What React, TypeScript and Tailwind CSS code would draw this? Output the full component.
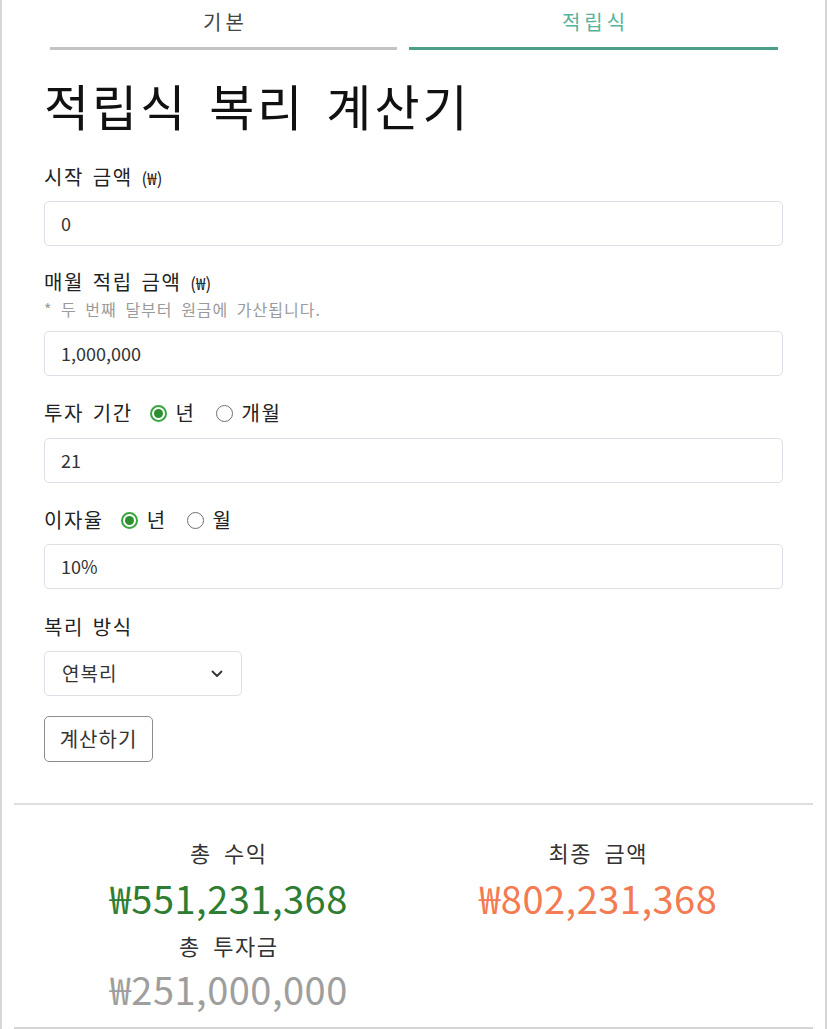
function Radio({ checked, label }: { checked?: boolean; label: string }) {
  return (
    <span className="flex items-center gap-[9px]">
      {checked ? (
        <span className="flex h-[17px] w-[17px] items-center justify-center rounded-full border-2 border-[#3aa63f]">
          <span className="h-[9px] w-[9px] rounded-full bg-[#2c8f2f]" />
        </span>
      ) : (
        <span className="h-[17px] w-[17px] rounded-full border-[1.5px] border-[#6f6f6f]" />
      )}
      <span>{label}</span>
    </span>
  )
}

function Field({ value }: { value: string }) {
  return (
    <div className="flex h-[45px] w-full items-center rounded-[5px] border border-[#dcdfe5] px-[16px] text-[18px] text-[#333]">
      {value}
    </div>
  )
}

export default function App() {
  return (
    <div className="min-h-[1029px] w-[827px] border-x-2 border-[#d6d6d6] bg-white font-['Noto_Sans_CJK_KR','Noto_Sans',sans-serif] text-[#222]">
      <div className="ml-[48px] flex gap-[12px]">
        <div className="w-[347px] border-b-[3px] border-[#c4c4c4] pt-2 pb-[11px] pl-[4px] text-center text-[20px] leading-[28px] tracking-[4px] text-[#444]">기본</div>
        <div className="w-[369px] border-b-[3px] border-[#4c9f88] pt-2 pb-[11px] pl-[4px] text-center text-[20px] leading-[28px] tracking-[4px] text-[#55b39b]">적립식</div>
      </div>

      <div className="mx-[42px] flex flex-col">
        <h1 className="mt-[25px] text-[49px] leading-[60px] tracking-[3px] text-[#111] [word-spacing:7px]">적립식 복리 계산기</h1>

        <label className="mt-[29px] text-[20px] leading-[26px] tracking-[1.5px] [word-spacing:3px]">시작 금액 <span className="text-[17px] tracking-normal">(₩)</span></label>
        <div className="mt-[10px]"><Field value="0" /></div>

        <label className="mt-[23px] text-[20px] leading-[26px] tracking-[1.5px] [word-spacing:3px]">매월 적립 금액 <span className="text-[17px] tracking-normal">(₩)</span></label>
        <p className="mt-[3px] text-[16px] leading-[20px] tracking-[1px] text-[#9a9a9a] [word-spacing:4px]">* 두 번째 달부터 원금에 가산됩니다.</p>
        <div className="mt-[12px]"><Field value="1,000,000" /></div>

        <div className="mt-[24px] flex items-center gap-[17px] text-[20px] leading-[26px] tracking-[1.5px] [word-spacing:3px]">
          <span>투자 기간</span>
          <div className="flex items-center gap-[20px]">
            <Radio checked label="년" />
            <Radio label="개월" />
          </div>
        </div>
        <div className="mt-[12px]"><Field value="21" /></div>

        <div className="mt-[24px] flex items-center gap-[17px] text-[20px] leading-[26px] tracking-[1.5px]">
          <span>이자율</span>
          <div className="flex items-center gap-[20px]">
            <Radio checked label="년" />
            <Radio label="월" />
          </div>
        </div>
        <div className="mt-[11px]"><Field value="10%" /></div>

        <label className="mt-[25px] text-[20px] leading-[26px] tracking-[1.5px] [word-spacing:3px]">복리 방식</label>
        <div className="mt-[11px] flex h-[45px] w-[198px] items-center justify-between rounded-[5px] border border-[#dcdfe5] pr-[18px] pl-[17px] text-[19px] tracking-[1px] text-[#333]">
          <span>연복리</span>
          <svg width="12" height="8" viewBox="0 0 12 8" fill="none" stroke="#333" strokeWidth="1.8" strokeLinecap="round" strokeLinejoin="round">
            <path d="M1.5 1.5 6 6l4.5-4.5" />
          </svg>
        </div>

        <button className="mt-[20px] h-[46px] w-[109px] rounded-[5px] border-[1.5px] border-[#8c8c8c] bg-white text-[20px] tracking-[1px] text-[#333]">계산하기</button>
      </div>

      <div className="mx-[12px] mt-[41px] h-[2px] bg-[#dedede]" />

      <div className="mx-[42px] mt-[31px] grid grid-cols-2 text-center">
        <div className="flex flex-col items-center">
          <div className="text-[22px] leading-[32px] tracking-[1.5px] text-[#333] [word-spacing:6px]">총 수익</div>
          <div className="mt-[2px] text-[38px] leading-[55px] tracking-[0.5px] text-[#2e7d32]">₩551,231,368</div>
          <div className="mt-[4px] text-[22px] leading-[32px] tracking-[1.5px] text-[#333] [word-spacing:6px]">총 투자금</div>
          <div className="text-[38px] leading-[55px] tracking-[0.5px] text-[#9e9e9e]">₩251,000,000</div>
        </div>
        <div className="flex flex-col items-center">
          <div className="text-[22px] leading-[32px] tracking-[1.5px] text-[#333] [word-spacing:6px]">최종 금액</div>
          <div className="mt-[2px] text-[38px] leading-[55px] tracking-[0.5px] text-[#f47a52]">₩802,231,368</div>
        </div>
      </div>

      <div className="mx-[12px] mt-[11px] h-[2px] bg-[#d6d6d6]" />
    </div>
  )
}
